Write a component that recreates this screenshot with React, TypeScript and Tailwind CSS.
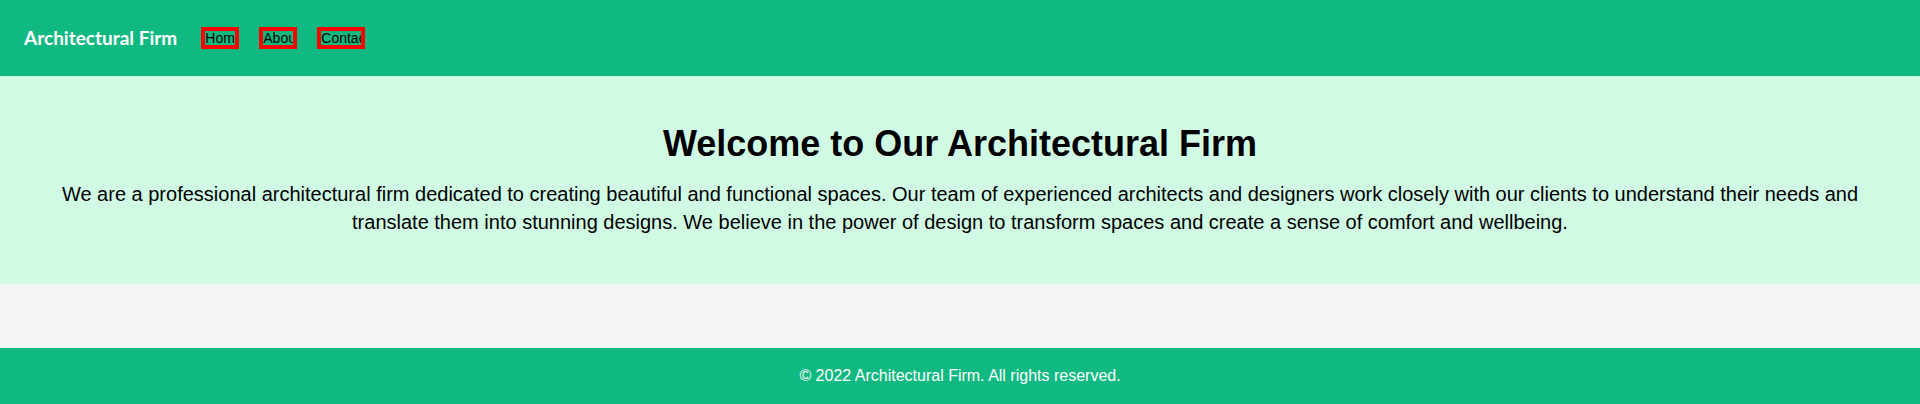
const links = [
  { label: 'Home', width: 'w-[38px]' },
  { label: 'About', width: 'w-[38px]' },
  { label: 'Contact', width: 'w-[48px]' },
];

export default function App() {
  return (
    <div className="flex min-h-[404px] flex-col bg-[#f3f4f6] font-['Liberation_Sans',sans-serif]">
      {/* Header */}
      <header className="flex h-[76px] items-center bg-[#10b981] px-6">
        <h1 className="font-['Lato',sans-serif] text-[19px] leading-7 font-bold text-white">Architectural Firm</h1>
        <nav className="ml-6 flex items-center gap-5">
          {links.map((link) => (
            <a
              key={link.label}
              href="#"
              className={`${link.width} block h-[22px] overflow-hidden whitespace-nowrap border-4 border-[#ff0000] text-[14px] leading-[14px] text-black`}
            >
              {link.label}
            </a>
          ))}
        </nav>
      </header>

      {/* Hero */}
      <section className="bg-[#d1fae5] px-8 py-12 text-center">
        <h2 className="mb-4 text-4xl font-bold text-black">Welcome to Our Architectural Firm</h2>
        <p className="text-xl text-black">
          We are a professional architectural firm dedicated to creating beautiful and functional spaces. Our team of
          experienced architects and designers work closely with our clients to understand their needs and translate them
          into stunning designs. We believe in the power of design to transform spaces and create a sense of comfort and
          wellbeing.
        </p>
      </section>

      <main className="flex-1" />

      {/* Footer */}
      <footer className="bg-[#10b981] p-4 text-center text-white">
        <p>© 2022 Architectural Firm. All rights reserved.</p>
      </footer>
    </div>
  );
}
